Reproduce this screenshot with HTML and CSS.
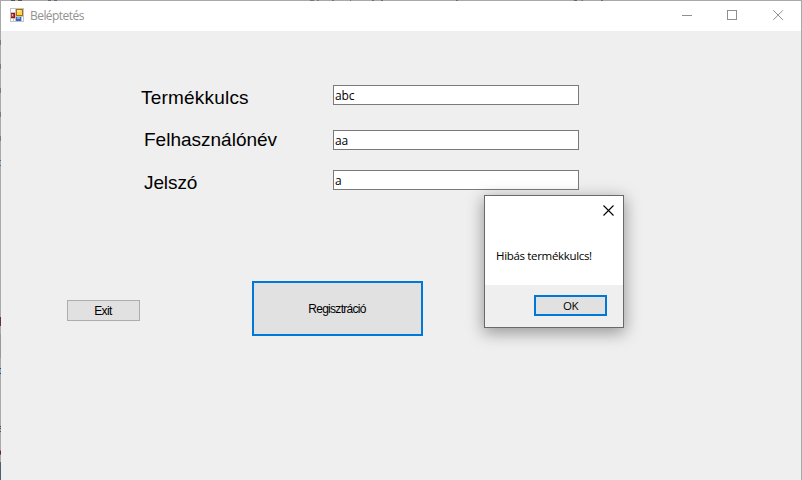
FILE: index.html
```
<!DOCTYPE html>
<html lang="hu">
<head>
<meta charset="utf-8">
<title>Beléptetés</title>
<link rel="stylesheet" href="styles.css">
</head>
<body>
<main class="window">
  <header class="titlebar">
    <svg class="app-icon" width="14" height="14" viewBox="0 0 14 14" shape-rendering="crispEdges">
      <path fill="#c3c3c3" d="M0 0h14v14H0z"/>
      <path fill="#fff" d="M1 1h4v3H1zM1 11h2v2H1zM4 11h1v2H4zM12 9h1v4h-1z"/>
      <path fill="#a96f0a" d="M6 1h7v7H6z"/>
      <path fill="#ffd34c" d="M7 2h5v5H7z"/>
      <path fill="#ffe99a" d="M7 2h3v2H7z"/>
      <path fill="#8e1616" d="M1 5h4v5H1z"/>
      <path fill="#d43a30" d="M1 6h3v3H1z"/>
      <path fill="#f4a493" d="M2 6h1v2H2z"/>
      <path fill="#3468bd" d="M6 9h5v4H6z"/>
      <path fill="#78adf5" d="M7 9h3v2H7z"/>
    </svg>
    <h1 class="title">Beléptetés</h1>
    <svg class="controls" width="102" height="12" viewBox="0 0 102 12" fill="none" stroke="#8f8f8f">
      <path d="M0 5.5h10M45.500.5h9v9h-9z" shape-rendering="crispEdges"/>
      <path d="M91.300.300l9.600 9.600M100.900.300l-9.600 9.600"/>
    </svg>
  </header>
  <section class="form">
    <div class="row row-key"><label class="label label-key" for="key">Termékkulcs</label><input class="field" id="key" value="abc"></div>
    <div class="row row-user"><label class="label label-user" for="user">Felhasználónév</label><input class="field" id="user" value="aa"></div>
    <div class="row row-pass"><label class="label label-pass" for="pass">Jelszó</label><input class="field" id="pass" value="a"></div>
  </section>
  <section class="actions">
    <button class="button exit"><span class="exit-text">Exit</span></button>
    <button class="button register"><span class="register-text">Regisztráció</span></button>
  </section>
</main>
<div class="dialog" role="alertdialog">
  <div class="dialog-top">
    <svg class="dialog-close" width="11" height="11" viewBox="0 0 11 11" fill="none" stroke="#000" stroke-width="1.1"><path d="M.5.5l10 10M10.500.5l-10 10"/></svg>
    <p class="message">Hibás termékkulcs!</p>
  </div>
  <div class="dialog-bottom"><button class="button ok">OK</button></div>
</div>
</body>
</html>
```
FILE: styles.css
```
* { box-sizing: border-box; }
body {
  margin: 0;
  width: 802px;
  height: 480px;
  overflow: hidden;
  position: relative;
  font-family: "Liberation Sans", sans-serif;
  color: #000;
}
.window {
  height: 480px;
  padding: 1px 1px 0;
  background:
    linear-gradient(#efefef, #efefef) 1px 1px / 800px 479px no-repeat,
    linear-gradient(90deg, transparent 11px, #555 11px 15px, transparent 15px 18px, #555 18px 22px, transparent 22px 48px, #667 48px 51px, transparent 51px 54px, #667 54px 57px, transparent 57px 310px, #667990 310px 314px, transparent 314px 317px, #867a7a 317px 319px, transparent 319px 332px, #747082 332px 334px, transparent 334px 350px, #806a7c 350px 351px, transparent 351px 372px, #716a86 372px 374px, transparent 374px 381px, #716d62 381px 383px, transparent 383px 456px, #716a86 456px 458px, transparent 458px 574px, #5e6684 574px 577px, transparent 577px 581px, #867a7a 581px 583px, transparent 583px 601px, #716a86 601px 603px, transparent 603px) 0 0 / 802px 1px no-repeat,
    linear-gradient(transparent 40px, #777d82 40px 45px, transparent 45px 64px, #777d82 64px 69px, transparent 69px 88px, #777d82 88px 93px, transparent 93px 112px, #777d82 112px 117px, transparent 117px 136px, #777d82 136px 141px, transparent 141px 160px, #3c76a0 160px 161px, transparent 161px 165px, #3c76a0 165px 166px, transparent 166px 317px, #662c50 317px 326px, transparent 326px 334px, #999 334px 358px, transparent 358px 368px, #434355 368px 369px, #72b0cc 369px 373px, #434355 373px 374px, transparent 374px 426px, #446 426px 427px, transparent 427px 428px, #446 428px 429px, transparent 429px 431px, #555 431px 432px, transparent 432px 450px, #b36a32 450px 451px, #552456 451px 454px, #b34c32 454px 455px, transparent 455px 462px, #52606c 462px) 0 0 / 1px 480px no-repeat,
    #a9a9a9;
}
.titlebar {
  height: 30px;
  display: flex;
  padding: 0 17px 0 9px;
  background: #fff;
}
.app-icon { margin-top: 7px; }
.title {
  margin: 6px 0 0 6px;
  font: 12px/18px "Open Sans", sans-serif;
  letter-spacing: -.55px;
  color: #929292;
}
.controls { margin: 9px 0 0 auto; }
.form { padding: 54px 0 0 140px; }
.row { display: flex; }
.row-key { height: 45px; }
.row-user { height: 40px; }
.row-pass { height: 30px; }
.label {
  width: 192px;
  height: 24px;
  margin-top: 1px;
  font-size: 19px;
  line-height: 24px;
  white-space: nowrap;
}
.label-key { letter-spacing: .2px; }
.label-user { margin-top: -2px; padding-left: 3px; }
.label-pass { padding-left: 3px; letter-spacing: -.1px; }
.field {
  width: 246px;
  height: 20px;
  margin: 0;
  padding: 0 0 0 1px;
  border: 1px solid #7a7a7a;
  border-radius: 0;
  outline: 0;
  background: #fff;
  color: #000;
  font: 12px/18px "Open Sans", sans-serif;
  letter-spacing: -.15px;
}
.actions {
  display: flex;
  align-items: flex-start;
  padding: 81px 0 0 66px;
}
.button {
  margin: 0;
  padding: 0;
  border: 2px solid #0078d7;
  border-radius: 0;
  background: #e1e1e1;
  color: #000;
}
.exit {
  width: 73px;
  height: 21px;
  margin-top: 19px;
  padding-top: 1px;
  border: 1px solid #adadad;
  font: 12px/18px "Liberation Sans", sans-serif;
  letter-spacing: -.6px;
}
.exit-text { margin-right: 1px; }
.register {
  width: 171px;
  height: 55px;
  margin-left: 112px;
  padding-top: 2px;
  font: 12px/49px "Liberation Sans", sans-serif;
  letter-spacing: -.7px;
}
.register-text { margin-right: 1px; }
.dialog {
  position: absolute;
  left: 484px;
  top: 195px;
  width: 140px;
  height: 133px;
  border: 1px solid #696969;
  background: #fff;
  box-shadow: 0 4px 15px 1px rgba(0, 0, 0, .36);
}
.dialog-top {
  height: 89px;
  display: flex;
  flex-direction: column;
  padding: 9px 9px 0 11px;
}
.dialog-close { align-self: flex-end; }
.message {
  margin: 31px 0 0;
  font: 11.500px/18px "Open Sans", sans-serif;
  letter-spacing: -.33px;
  white-space: nowrap;
}
.dialog-bottom {
  height: 42px;
  padding: 10px 16px 0 49px;
  background: #efefef;
}
.ok {
  display: block;
  width: 73px;
  height: 21px;
  padding-top: 1px;
  font: 11.500px/16px "Open Sans", sans-serif;
  letter-spacing: -.4px;
}
```
